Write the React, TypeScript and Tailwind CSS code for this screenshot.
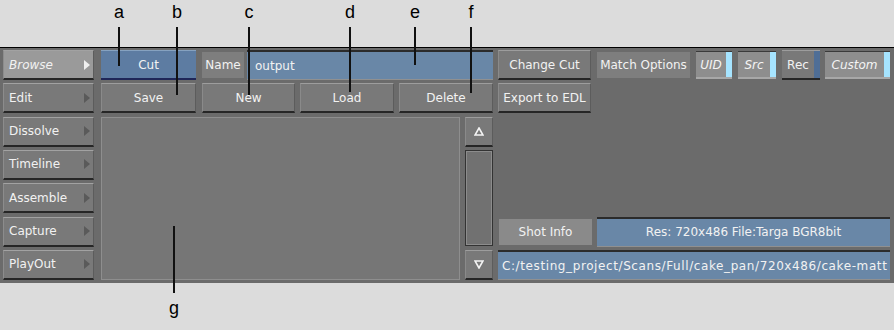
import React from "react";

const font = "font-['DejaVu_Sans',sans-serif]";

function Btn({ children, className = "" }: { children?: React.ReactNode; className?: string }) {
  return (
    <div
      className={`flex items-center justify-center bg-[#797979] border-t border-t-[#9d9d9d] border-l border-l-[#8a8a8a] border-r border-r-[#5c5c5c] border-b-2 border-b-[#262626] text-[#f2f2f2] text-[12px] leading-none ${className}`}
    >
      {children}
    </div>
  );
}

function Field({ children, className = "" }: { children?: React.ReactNode; className?: string }) {
  return (
    <div
      className={`flex items-center bg-[#6987a7] border-t-2 border-t-[#2b2b2b] border-b border-b-[#909090] text-[#f2f2f2] text-[12px] leading-none overflow-hidden whitespace-nowrap ${className}`}
    >
      {children}
    </div>
  );
}

function Toggle({ label, w, stripe }: { label: string; w: string; stripe: string }) {
  return (
    <div className={`flex h-[28px] self-center ${w} bg-[#8e8e8e] border-t border-t-[#3a3a3a] border-b-2 border-b-[#a8a8a8]`}>
      <div className="flex-1 flex items-center justify-center italic text-[#f4f4f4] text-[12px]">{label}</div>
      <div className={`w-[6px] ${stripe}`} />
    </div>
  );
}

function MenuBtn({ label, active }: { label: string; active?: boolean }) {
  return (
    <div
      className={`flex items-center h-[30px] pl-[5px] pr-[3px] border-t border-t-[#a2a2a2] border-l border-l-[#8c8c8c] border-r border-r-[#5c5c5c] border-b-2 border-b-[#262626] text-[12px] text-[#f2f2f2] ${
        active ? "bg-[#9a9a9a] italic" : "bg-[#797979]"
      }`}
    >
      <span className="flex-1">{label}</span>
      <svg width="6" height="10" viewBox="0 0 6 10">
        <polygon points="0,0 6,5 0,10" fill={active ? "#f0f0f0" : "#5a5a5a"} />
      </svg>
    </div>
  );
}

function Ann({ letter, x, end }: { letter: string; x: number; end: number }) {
  return (
    <>
      <div
        className="absolute top-[2px] w-[20px] -ml-[10px] text-center text-[18px] leading-[20px] text-black font-['Liberation_Sans',sans-serif]"
        style={{ left: x }}
      >
        {letter}
      </div>
      <div className="absolute w-[2px] -ml-[1px] bg-[#111]" style={{ left: x, top: 27, height: end - 27 }} />
    </>
  );
}

export default function App() {
  const menu = ["Browse", "Edit", "Dissolve", "Timeline", "Assemble", "Capture", "PlayOut"];
  return (
    <div className={`relative w-[894px] h-[330px] bg-[#dcdcdc] overflow-hidden ${font}`}>
      <div className="h-[47px]" />
      <div className="h-[236px] border-t border-t-black bg-[#6b6b6b] pt-[2px] pl-[3px] flex gap-[7px]">
        {/* left menu */}
        <div className="w-[91px] flex flex-col gap-[3.33px]">
          {menu.map((m, i) => (
            <MenuBtn key={m} label={m} active={i === 0} />
          ))}
        </div>
        {/* main */}
        <div className="w-[789px] h-[230px] flex gap-[5px]">
          {/* left half */}
          <div className="w-[392px] flex flex-col gap-[3.33px]">
            <div className="flex h-[30px]">
              <div className="w-[95px] flex items-center justify-center bg-[#5d7ca2] border-t border-t-[#86a2c0] border-b-2 border-b-[#1f2658] text-[12px] text-[#f2f2f2]">
                Cut
              </div>
              <div className="ml-[6px] w-[42px] h-[26px] self-center flex items-center justify-center bg-[#7e7e7e] text-[12px] text-[#f2f2f2]">
                Name
              </div>
              <Field className="ml-[3px] w-[246px] pl-[8px]">output</Field>
            </div>
            <div className="flex h-[30px]">
              <Btn className="w-[95px]">Save</Btn>
              <Btn className="ml-[6px] w-[93px]">New</Btn>
              <Btn className="ml-[5px] w-[94px]">Load</Btn>
              <Btn className="ml-[5px] w-[94px]">Delete</Btn>
            </div>
            <div className="flex-1 flex gap-[5px]">
              <div className="w-[359px] bg-[#767676] border border-[#8e8e8e]" />
              <div className="w-[28px] flex flex-col">
                <Btn className="h-[30px]">
                  <svg width="10" height="9" viewBox="0 0 10 9">
                    <polygon points="5,1 9,8 1,8" fill="none" stroke="#f4f4f4" strokeWidth="1.6" />
                  </svg>
                </Btn>
                <div className="mt-[3px] flex-1 border border-[#333] p-0">
                  <div className="h-full border border-[#8c8c8c] bg-[#717171]" />
                </div>
                <Btn className="mt-[4px] h-[30px]">
                  <svg width="10" height="9" viewBox="0 0 10 9">
                    <polygon points="1,1 9,1 5,8" fill="none" stroke="#f4f4f4" strokeWidth="1.6" />
                  </svg>
                </Btn>
              </div>
            </div>
          </div>
          {/* right half */}
          <div className="w-[392px] flex flex-col gap-[3.33px]">
            <div className="flex h-[30px]">
              <Btn className="w-[93px]">Change Cut</Btn>
              <div className="ml-[6px] w-[93px] h-[26px] self-center flex items-center justify-center bg-[#7e7e7e] text-[12px] text-[#f2f2f2]">
                Match Options
              </div>
              <div className="ml-[6px] flex">
                <Toggle label="UID" w="w-[36px]" stripe="bg-[#a6e4ff]" />
              </div>
              <div className="ml-[6px] flex">
                <Toggle label="Src" w="w-[38px]" stripe="bg-[#a6e4ff]" />
              </div>
              <div className="ml-[6px] w-[38px] flex bg-[#797979] border-t border-t-[#9d9d9d] border-b-2 border-b-[#262626]">
                <div className="flex-1 flex items-center justify-center text-[12px] text-[#f2f2f2]">Rec</div>
                <div className="w-[6px] bg-[#4f6e96]" />
              </div>
              <div className="ml-[5px] flex">
                <Toggle label="Custom" w="w-[65px]" stripe="bg-[#a6e4ff]" />
              </div>
            </div>
            <div className="flex h-[30px]">
              <Btn className="w-[93px]">Export to EDL</Btn>
            </div>
            <div className="flex-1" />
            <div className="flex h-[30px]">
              <div className="ml-[1px] w-[93px] h-[26px] self-center flex items-center justify-center bg-[#8a8a8a] text-[12px] text-[#f2f2f2]">
                Shot Info
              </div>
              <Field className="ml-[5px] w-[293px] justify-center">Res: 720x486 File:Targa BGR8bit</Field>
            </div>
            <Field className="h-[30px] w-[392px] pl-[4px]">
              <span className="text-[12px] tracking-[0.6px]">C:/testing_project/Scans/Full/cake_pan/720x486/cake-matt</span>
            </Field>
          </div>
        </div>
      </div>

      {/* annotations */}
      <Ann letter="a" x={119} end={66} />
      <Ann letter="b" x={177} end={95} />
      <Ann letter="c" x={249} end={95} />
      <Ann letter="d" x={350} end={92} />
      <Ann letter="e" x={415} end={65} />
      <Ann letter="f" x={471} end={93} />
      <div className="absolute w-[2px] -ml-[1px] bg-[#111]" style={{ left: 174, top: 226, height: 67 }} />
      <div className="absolute left-[164px] top-[298px] w-[20px] text-center text-[18px] leading-[20px] text-black font-['Liberation_Sans',sans-serif]">
        g
      </div>
    </div>
  );
}
